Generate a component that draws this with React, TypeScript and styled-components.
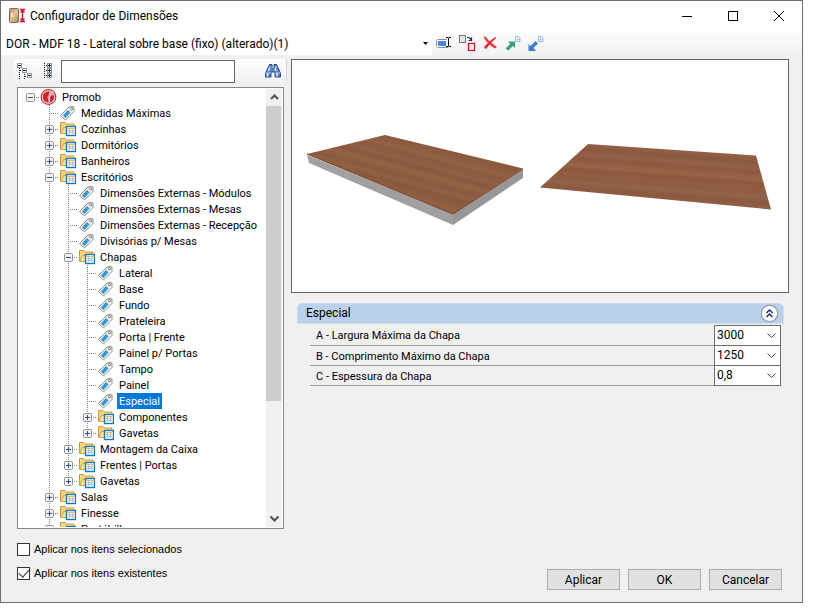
import React from "react";
import styled, { createGlobalStyle, css } from "styled-components";

const uiFont = 'Roboto, "Liberation Sans", Arial, sans-serif';
const wideFont = '"Liberation Sans", Arial, sans-serif';
const titleFont = 'Roboto, "Open Sans", sans-serif';

const GlobalStyle = createGlobalStyle`
  * { box-sizing: border-box; }
  body { margin: 0; background: #fff; font-family: ${uiFont}; font-size: 11px; color: #000; }
  button, input, select { font: inherit; color: inherit; margin: 0; }
  svg { display: block; flex: none; }
`;

const Window = styled.div`
  display: flex;
  flex-direction: column;
  height: calc(100vh - 8px);
  min-height: 440px;
  margin-right: 11px;
  border: 1px solid #6e6e6e;
  background: #f0f0f0;
`;

const TitleBar = styled.header`
  display: flex;
  align-items: center;
  height: 30px;
  flex: none;
  padding-left: 8px;
  background: #fff;
`;

const Title = styled.h1`
  flex: 1;
  margin: 0 0 0 3px;
  font: 400 12px/16px ${titleFont};
  white-space: nowrap;
`;

const CaptionButton = styled.button`
  display: grid;
  place-items: center;
  width: 46px;
  height: 30px;
  padding: 0;
  border: 0;
  background: transparent;
`;

const ItemBar = styled.div`
  display: flex;
  align-items: center;
  height: 24px;
  flex: none;
  background: linear-gradient(#fcfcfc, #f1f1f1);
  border-radius: 0 3px 3px 0;
`;

const ItemPicker = styled.button`
  display: flex;
  align-items: center;
  width: 431px;
  height: 23px;
  padding: 1px 4px 0 5px;
  border: 0;
  background: #fff;
  font: 400 12px/16px ${titleFont};
  text-align: left;
  white-space: nowrap;
  span { flex: 1; }
`;

const ToolGroup = styled.div`
  display: flex;
  gap: 7px;
  padding-left: 4px;
`;

const ToolButton = styled.button`
  display: grid;
  place-items: center;
  width: 16px;
  height: 18px;
  padding: 0;
  border: 0;
  background: transparent;
`;

const Body = styled.main`
  display: flex;
  flex: 1;
  min-height: 0;
  gap: 4px;
  padding: 4px 13px 0;
`;

const Sidebar = styled.section`
  display: flex;
  flex-direction: column;
  width: 273px;
  flex: none;
`;

const SearchBar = styled.div`
  display: flex;
  align-items: center;
  height: 24px;
  flex: none;
  margin-bottom: 4px;
  padding: 0 5px 0 3px;
  border-right: 1px solid #d6d6d6;
  border-radius: 3px;
  background: linear-gradient(#fdfdfd, #f1f1f1);
`;

const SearchTools = styled.div`
  display: flex;
  gap: 9px;
  width: 44px;
`;

const SearchField = styled.input`
  width: 174px;
  height: 23px;
  margin-right: auto;
  padding: 0 4px;
  border: 1px solid #646464;
  background: #fff;
  outline: 0;
`;

const TreeBox = styled.div`
  display: flex;
  flex: 1;
  min-height: 0;
  margin: 0 3px;
  padding: 1px;
  border: 1px solid #828790;
  background: #fff;
`;

const TreeList = styled.ul`
  flex: 1;
  min-width: 0;
  margin: 0;
  padding: 0 0 0 2px;
  overflow: hidden;
  list-style: none;
`;

const TreeRow = styled.li`
  display: flex;
  align-items: center;
  height: 16px;
  white-space: nowrap;
`;

type GuideKind = "none" | "through" | "branch" | "end" | "root";
const vDots = "repeating-linear-gradient(#808080 0 1px, transparent 1px 2px)";
const hDots = "repeating-linear-gradient(90deg, #808080 0 1px, transparent 1px 2px)";

const Guide = styled.span<{ $kind: GuideKind }>`
  display: grid;
  place-items: center;
  width: 19px;
  height: 16px;
  flex: none;
  ${({ $kind }) =>
    $kind === "root" &&
    css`
      background: ${hDots} 9px 8px / 10px 1px no-repeat;
    `}
  ${({ $kind }) =>
    $kind === "through" &&
    css`
      background: ${vDots} 9px 0 / 1px 16px no-repeat;
    `}
  ${({ $kind }) =>
    $kind === "branch" &&
    css`
      background: ${vDots} 9px 0 / 1px 16px no-repeat, ${hDots} 9px 8px / 10px 1px no-repeat;
    `}
  ${({ $kind }) =>
    $kind === "end" &&
    css`
      background: ${vDots} 9px 0 / 1px 8px no-repeat, ${hDots} 9px 8px / 10px 1px no-repeat;
    `}
`;

const Expander = styled.button`
  display: block;
  width: 9px;
  height: 9px;
  padding: 0;
  border: 0;
  background: transparent;
`;

const NodeIcon = styled.span`
  display: flex;
  align-items: center;
  width: 20px;
  height: 16px;
  flex: none;
`;

const NodeLabel = styled.span<{ $selected?: boolean }>`
  height: 16px;
  padding: 2px 2px 0;
  line-height: 14px;
  color: ${({ $selected }) => ($selected ? "#fff" : "#000")};
  background: ${({ $selected }) => ($selected ? "#0078d7" : "transparent")};
`;

const ScrollTrack = styled.div`
  display: flex;
  flex-direction: column;
  width: 16px;
  flex: none;
  background: #f0f0f0;
`;

const ScrollArrow = styled.button`
  display: grid;
  place-items: center;
  height: 17px;
  flex: none;
  padding: 0;
  border: 0;
  background: transparent;
`;

const ScrollRun = styled.div`
  flex: 1;
`;

const ScrollThumb = styled.div`
  height: 73%;
  margin-right: 1px;
  background: #cdcdcd;
`;

const Details = styled.section`
  display: flex;
  flex-direction: column;
  flex: 1;
  min-width: 0;
`;

const Preview = styled.figure`
  height: 234px;
  flex: none;
  margin: 0;
  border: 1px solid #646464;
  background: #fff;
  svg { width: 100%; height: 100%; }
`;

const Group = styled.section`
  margin: 10px 5px 0 6px;
`;

const GroupHeader = styled.header`
  display: flex;
  align-items: center;
  justify-content: space-between;
  height: 21px;
  padding: 0 5px 0 8px;
  border: 1px solid #cfdeef;
  border-radius: 5px 5px 0 0;
  background: #b9d1ea;
`;

const GroupTitle = styled.h2`
  margin: 0;
  padding-bottom: 1px;
  font-size: 12px;
  font-weight: 400;
  line-height: 16px;
`;

const CollapseButton = styled.button`
  display: grid;
  place-items: center;
  width: 17px;
  height: 17px;
  padding: 0;
  border: 1px solid #9a9ea6;
  border-radius: 50%;
  background: #fff;
  box-shadow: 0 0 1px #777;
`;

const Fields = styled.div`
  margin: 1px 3px 0 13px;
`;

const Field = styled.div`
  display: flex;
  align-items: stretch;
  height: 20px;
  border-bottom: 1px solid #9a9a9a;
  &:first-child { height: 21px; }
`;

const FieldLabel = styled.label`
  flex: 1;
  align-self: center;
  padding: 1px 0 0 6px;
`;

const SelectFrame = styled.div`
  display: flex;
  align-items: center;
  width: 67px;
  margin-bottom: -1px;
  padding-right: 4px;
  border: solid #6e6e6e;
  border-width: 0 1px 1px;
  background: #fff;
  ${Field}:first-child & { border-top-width: 1px; }
`;

const Select = styled.select`
  flex: 1;
  min-width: 0;
  height: 18px;
  padding: 0 0 2px 2px;
  border: 0;
  outline: 0;
  appearance: none;
  background: transparent;
  font-size: 12px;
`;

const Footer = styled.footer`
  display: flex;
  justify-content: space-between;
  align-items: flex-end;
  height: 73px;
  flex: none;
  padding: 0 20px 12px 16px;
`;

const Checks = styled.div`
  display: flex;
  flex-direction: column;
  gap: 8px;
  padding-bottom: 9px;
  font-family: ${wideFont};
`;

const Check = styled.label`
  display: flex;
  align-items: center;
  gap: 4px;
  height: 16px;
`;

const CheckInput = styled.input`
  display: grid;
  place-items: center;
  appearance: none;
  width: 13px;
  height: 13px;
  border: 1px solid #333;
  background: #fff;
  &:checked::after {
    content: "";
    width: 5px;
    height: 9px;
    border: solid #333;
    border-width: 0 1px 1px 0;
    transform: translateY(-1px) rotate(42deg);
  }
`;

const Actions = styled.div`
  display: flex;
  gap: 8px;
`;

const ActionButton = styled.button`
  width: 73px;
  height: 21px;
  padding: 0;
  border: 1px solid #adadad;
  background: #e1e1e1;
  font-size: 12px;
  line-height: 18px;
`;

const AppIcon = () => (
  <svg width="18" height="18" viewBox="0 0 18 18">
    <defs>
      <linearGradient id="door" x1="0" y1="0" x2="1" y2="1">
        <stop offset="0" stopColor="#b59067" />
        <stop offset=".5" stopColor="#dfc091" />
        <stop offset="1" stopColor="#a98258" />
      </linearGradient>
    </defs>
    <rect x=".5" y="1.5" width="9" height="14" rx="1" fill="url(#door)" stroke="#8b6b49" />
    <path d="M3 6v4" stroke="#f6f6f6" strokeWidth="1.5" />
    <path d="M11 2.500h5M11 14.500h5M13.500 3.500v10M11.500 5.500l2-2 2 2M11.500 11.500l2 2 2-2" fill="none" stroke="#df0b2c" strokeWidth="1.300" />
  </svg>
);

const RenameIcon = () => (
  <svg width="16" height="16" viewBox="0 0 16 16">
    <path d="M11 4.500H1.500l-1 1v6l1 1H12.500" fill="#fff" stroke="#8794a8" />
    <rect x="2" y="6" width="8" height="5" fill="#4a85ea" />
    <path d="M10 2.500h2l.500.500.500-.500h2M12.500 3v8M10 11.500h2l.500-.500.500.500h2" fill="none" stroke="#111" />
  </svg>
);

const ReplaceIcon = () => (
  <svg width="16" height="18" viewBox="0 0 16 18">
    <rect x=".5" y="1.500" width="6" height="7" fill="#e4e4e4" stroke="#777" />
    <path d="M8 3.500h2l2 2M12.500 3.500v3H9.500" fill="none" stroke="#17276d" strokeWidth="1.200" />
    <rect x="9.500" y="9.500" width="6" height="7" fill="#f4f4f4" stroke="#e60012" strokeWidth="1.200" />
  </svg>
);

const DeleteIcon = () => (
  <svg width="16" height="16" viewBox="0 0 16 16">
    <path d="M1.500 2l2-.500C6 5.500 10 8.500 15 12l-2 1.500C8 10.500 4 7 1.500 2z" fill="#f23a3e" />
    <path d="M14.500 2.500l-1-.500C9 5 5 8.500 2 12l1 1.800 1.500-.3C7 10 10 6.500 14.500 2.500z" fill="#ee2329" />
  </svg>
);

const PageGlyph = () => (
  <path d="M10.500 2.500h3l1.500 1.500v3.500h-4.500zM12 5.500h2" fill="#e3eeff" stroke="#9dbbe8" />
);

const ExportIcon = () => (
  <svg width="16" height="18" viewBox="0 0 16 18">
    <PageGlyph />
    <path d="M3 7.500H10V14L7.700 12 3.500 16.500.5 14.500 5.200 10z" fill="#2fa47c" />
  </svg>
);

const ImportIcon = () => (
  <svg width="16" height="18" viewBox="0 0 16 18">
    <PageGlyph />
    <path d="M.500 17V10l2 2L7.500 7l2.500 2.500L5.500 14 8 17z" fill="#3a7fd0" />
  </svg>
);

const BoxGlyph = ({ x, y, plus }: { x: number; y: number; plus?: boolean }) => (
  <g fill="none">
    <rect x={x + 0.5} y={y + 0.5} width="4" height="4" fill="#fff" stroke="#8a97ab" />
    <path d={`M${x + 1} ${y + 2.5}h3${plus ? `M${x + 2.5} ${y + 1}v3` : ""}`} stroke="#222" />
  </g>
);

const ExpandTreeIcon = () => (
  <svg width="16" height="18" viewBox="0 0 16 18">
    <path d="M2.500 6v11M3 8.500h3M7.500 12v5M8 14.500h3" fill="none" stroke="#111" strokeDasharray="1 1" />
    <BoxGlyph x={0} y={1} />
    <BoxGlyph x={5} y={6} />
    <BoxGlyph x={10} y={11} />
  </svg>
);

const CollapseTreeIcon = () => (
  <svg width="16" height="18" viewBox="0 0 16 18">
    <path d="M2.500 1v16M4 3.500h1M4 8.500h1M4 13.500h1" stroke="#111" strokeDasharray="1 1" />
    <BoxGlyph x={5} y={1} plus />
    <BoxGlyph x={5} y={6} plus />
    <BoxGlyph x={5} y={11} plus />
  </svg>
);

const BinocularsIcon = () => (
  <svg width="16" height="16" viewBox="0 0 16 16">
    <path d="M3 4.500L4.500 1.500H7v3l1 1 1-1v-3h2.500L13 4.500l2.500 6v3.500h-5.500V9H6v5H.500v-3.500z" fill="#5685c6" stroke="#24468b" />
    <path d="M2.500 10v3.500M4.500 5l-1 3M12 10v3.500M10.500 5v3" stroke="#e7f2ff" strokeWidth="1.500" />
    <path d="M3.500 4h3M9.500 4h3M1 10h5M10 10h5" stroke="#b3c9e8" />
  </svg>
);

const PromobIcon = () => (
  <svg width="17" height="16" viewBox="0 0 17 16">
    <circle cx="8.500" cy="8" r="7.300" fill="#fff" stroke="#d3232e" strokeWidth="1.200" />
    <circle cx="8.500" cy="8" r="5.800" fill="#cf202c" />
    <path d="M9 3l3-.500 2 3-1 1.500-2-.500-1.500 1.500 1 2-1.500 3.500L8 13l.500-3L7 8.500 8.500 6z" fill="#fff" fillOpacity=".45" />
    <path d="M11.500 3.500l-2 1.500 1 1.500-1.500 2 .500 4.500" fill="none" stroke="#fff" />
  </svg>
);

const TagIcon = () => (
  <svg width="17" height="16" viewBox="0 0 17 16">
    <path d="M1.500 10.500l8.500-8.500 4.500-.500.500.500v4.500L6.500 15z" fill="#f4f4f4" stroke="#8c8c8c" />
    <path d="M4 10.500l5-5.500 2.500 2.500-5 5.500z" fill="#238bc9" />
    <path d="M5.500 9l2.500 2M7.500 6.500l2.500 2.500" stroke="#77c2ec" />
    <circle cx="12.500" cy="3.800" r="1.200" fill="#fff" stroke="#777" />
  </svg>
);

const FolderIcon = () => (
  <svg width="17" height="16" viewBox="0 0 17 16">
    <path d="M1.500 12.500V1.500H6L7.500 3H15v5" fill="#f9d57c" stroke="#d59a36" />
    <path d="M2 12.500L4.500 6.500H15v6z" fill="#ffe39a" stroke="#d9a23f" />
    <rect x="7.500" y="5.500" width="9" height="9" fill="#fff" stroke="#137ab8" strokeWidth="1.400" />
    <path d="M9 7.500h6" stroke="#f1b843" />
    <path d="M9 9.500h6M9 11.500h6M10.500 8v5M13.500 8v5" stroke="#a9c4e0" />
  </svg>
);

const ExpanderGlyph = ({ open }: { open: boolean }) => (
  <svg width="9" height="9" viewBox="0 0 9 9">
    <rect x=".5" y=".5" width="8" height="8" rx="1" fill="#f4f4f4" stroke="#919191" />
    <path d={open ? "M2 4.500h5" : "M2 4.500h5M4.500 2v5"} stroke="#2f4f93" />
  </svg>
);

const Chevron = ({ up, bold }: { up?: boolean; bold?: boolean }) => (
  <svg width="9" height="7" viewBox="0 0 9 7">
    <path d={up ? "M1 5l3.500-3.500L8 5" : "M.500 1.500L4.500 5.500l4-4"} fill="none" stroke="#505050" strokeWidth={bold ? 2 : 1} />
  </svg>
);

const BoardsDrawing = () => (
  <svg viewBox="0 0 496 232" role="img" aria-label="Chapa">
    <defs>
      <linearGradient id="grainA" gradientUnits="userSpaceOnUse" x1="100" y1="80" x2="88" y2="124" spreadMethod="repeat">
        <stop offset="0" stopColor="#8d5b3f" />
        <stop offset=".12" stopColor="#936143" />
        <stop offset=".2" stopColor="#8c5a3f" />
        <stop offset=".35" stopColor="#916043" />
        <stop offset=".42" stopColor="#89573c" />
        <stop offset=".55" stopColor="#946244" />
        <stop offset=".7" stopColor="#8b593e" />
        <stop offset=".8" stopColor="#926042" />
        <stop offset=".88" stopColor="#8a583d" />
        <stop offset="1" stopColor="#8d5b3f" />
      </linearGradient>
      <linearGradient id="grainB" gradientUnits="userSpaceOnUse" x1="360" y1="84" x2="357" y2="124" spreadMethod="repeat">
        <stop offset="0" stopColor="#8d5c41" />
        <stop offset=".1" stopColor="#936247" />
        <stop offset=".25" stopColor="#8b593f" />
        <stop offset=".4" stopColor="#926045" />
        <stop offset=".5" stopColor="#8c5940" />
        <stop offset=".68" stopColor="#966446" />
        <stop offset=".78" stopColor="#8b583e" />
        <stop offset=".9" stopColor="#915e43" />
        <stop offset="1" stopColor="#8d5c41" />
      </linearGradient>
    </defs>
    <path d="M15 95L161 154V165L17 103z" fill="#a0a0a0" />
    <path d="M161 154L231 109V118L161 165z" fill="#979797" />
    <path d="M15 94L93 75L231 108.500L161 154z" fill="url(#grainA)" />
    <path d="M15 94L161 154L231 109" fill="none" stroke="#7a4128" />
    <path d="M296 84L464 95.500L479 149.500L248 127.500z" fill="url(#grainB)" />
  </svg>
);

type NodeKind = "root" | "folder" | "tag";
interface TreeNode {
  label: string;
  kind: NodeKind;
  children?: TreeNode[];
  selected?: boolean;
}

const tag = (label: string, selected = false): TreeNode => ({ label, kind: "tag", selected });
const folder = (label: string, children?: TreeNode[]): TreeNode => ({ label, kind: "folder", children });

const tree: TreeNode = {
  label: "Promob",
  kind: "root",
  children: [
    tag("Medidas Máximas"),
    folder("Cozinhas"),
    folder("Dormitórios"),
    folder("Banheiros"),
    folder("Escritórios", [
      tag("Dimensões Externas - Módulos"),
      tag("Dimensões Externas - Mesas"),
      tag("Dimensões Externas - Recepção"),
      tag("Divisórias p/ Mesas"),
      folder("Chapas", [
        tag("Lateral"),
        tag("Base"),
        tag("Fundo"),
        tag("Prateleira"),
        tag("Porta | Frente"),
        tag("Painel p/ Portas"),
        tag("Tampo"),
        tag("Painel"),
        tag("Especial", true),
        folder("Componentes"),
        folder("Gavetas"),
      ]),
      folder("Montagem da Caixa"),
      folder("Frentes | Portas"),
      folder("Gavetas"),
    ]),
    folder("Salas"),
    folder("Finesse"),
    folder("Portábille"),
  ],
};

const icons: Record<NodeKind, () => React.JSX.Element> = {
  root: PromobIcon,
  folder: FolderIcon,
  tag: TagIcon,
};

function Branch({ node, guides, last }: { node: TreeNode; guides: GuideKind[]; last: boolean }) {
  const Icon = icons[node.kind];
  const isRoot = node.kind === "root";
  const childGuides: GuideKind[] = [...guides, isRoot || last ? "none" : "through"];
  return (
    <>
      <TreeRow role="treeitem" aria-selected={!!node.selected}>
        {guides.map((kind, i) => (
          <Guide key={i} $kind={kind} />
        ))}
        <Guide $kind={isRoot ? "root" : last ? "end" : "branch"}>
          {node.kind !== "tag" && (
            <Expander type="button" aria-label={node.label}>
              <ExpanderGlyph open={!!node.children} />
            </Expander>
          )}
        </Guide>
        <NodeIcon>
          <Icon />
        </NodeIcon>
        <NodeLabel $selected={node.selected}>{node.label}</NodeLabel>
      </TreeRow>
      {node.children?.map((child, i, all) => (
        <Branch key={child.label} node={child} guides={childGuides} last={i === all.length - 1} />
      ))}
    </>
  );
}

const fields = [
  { id: "largura", label: "A - Largura Máxima da Chapa", value: "3000" },
  { id: "comprimento", label: "B - Comprimento Máximo da Chapa", value: "1250" },
  { id: "espessura", label: "C - Espessura da Chapa", value: "0,8" },
];

const tools = [
  { label: "Renomear", Icon: RenameIcon },
  { label: "Substituir", Icon: ReplaceIcon },
  { label: "Excluir", Icon: DeleteIcon },
  { label: "Exportar", Icon: ExportIcon },
  { label: "Importar", Icon: ImportIcon },
];

export default function App() {
  return (
    <>
      <GlobalStyle />
      <Window>
        <TitleBar>
          <AppIcon />
          <Title>Configurador de Dimensões</Title>
          <CaptionButton aria-label="Minimizar">
            <svg width="10" height="10"><path d="M0 5.500h10" stroke="#000" /></svg>
          </CaptionButton>
          <CaptionButton aria-label="Maximizar">
            <svg width="10" height="10"><rect x=".5" y=".5" width="9" height="9" fill="none" stroke="#000" /></svg>
          </CaptionButton>
          <CaptionButton aria-label="Fechar">
            <svg width="10" height="10"><path d="M0 0l10 10M10 0L0 10" stroke="#000" /></svg>
          </CaptionButton>
        </TitleBar>

        <ItemBar>
          <ItemPicker type="button">
            <span>DOR - MDF 18 - Lateral sobre base (fixo) (alterado)(1)</span>
            <svg width="5" height="3"><path d="M0 0h5L2.500 3z" /></svg>
          </ItemPicker>
          <ToolGroup>
            {tools.map(({ label, Icon }) => (
              <ToolButton key={label} type="button" aria-label={label}>
                <Icon />
              </ToolButton>
            ))}
          </ToolGroup>
        </ItemBar>

        <Body>
          <Sidebar>
            <SearchBar>
              <SearchTools>
                <ToolButton type="button" aria-label="Expandir tudo"><ExpandTreeIcon /></ToolButton>
                <ToolButton type="button" aria-label="Recolher tudo"><CollapseTreeIcon /></ToolButton>
              </SearchTools>
              <SearchField type="text" aria-label="Pesquisar" />
              <ToolButton type="button" aria-label="Localizar"><BinocularsIcon /></ToolButton>
            </SearchBar>
            <TreeBox>
              <TreeList role="tree">
                <Branch node={tree} guides={[]} last />
              </TreeList>
              <ScrollTrack>
                <ScrollArrow type="button" aria-label="Rolar para cima"><Chevron up bold /></ScrollArrow>
                <ScrollRun><ScrollThumb /></ScrollRun>
                <ScrollArrow type="button" aria-label="Rolar para baixo"><Chevron bold /></ScrollArrow>
              </ScrollTrack>
            </TreeBox>
          </Sidebar>

          <Details>
            <Preview><BoardsDrawing /></Preview>
            <Group>
              <GroupHeader>
                <GroupTitle>Especial</GroupTitle>
                <CollapseButton type="button" aria-label="Recolher grupo">
                  <svg width="9" height="9" viewBox="0 0 9 9">
                    <path d="M1.500 4l3-3 3 3M1.500 8l3-3 3 3" fill="none" stroke="#1c3766" strokeWidth="1.500" />
                  </svg>
                </CollapseButton>
              </GroupHeader>
              <Fields>
                {fields.map((field) => (
                  <Field key={field.id}>
                    <FieldLabel htmlFor={field.id}>{field.label}</FieldLabel>
                    <SelectFrame>
                      <Select id={field.id} defaultValue={field.value}>
                        <option>{field.value}</option>
                      </Select>
                      <Chevron />
                    </SelectFrame>
                  </Field>
                ))}
              </Fields>
            </Group>
          </Details>
        </Body>

        <Footer>
          <Checks>
            <Check><CheckInput type="checkbox" />Aplicar nos itens selecionados</Check>
            <Check><CheckInput type="checkbox" defaultChecked />Aplicar nos itens existentes</Check>
          </Checks>
          <Actions>
            <ActionButton type="button">Aplicar</ActionButton>
            <ActionButton type="button">OK</ActionButton>
            <ActionButton type="button">Cancelar</ActionButton>
          </Actions>
        </Footer>
      </Window>
    </>
  );
}
